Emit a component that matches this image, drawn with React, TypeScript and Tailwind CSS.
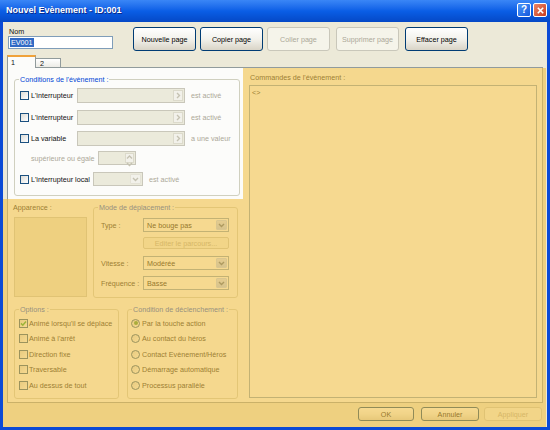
import React from 'react'

function CheckBox({ checked }: { checked?: boolean }) {
  return (
    <span className="w-[9px] h-[9px] shrink-0 border border-[#1c5180] bg-gradient-to-br from-[#dcdcd7] to-white flex items-center justify-center">
      {checked && (
        <svg viewBox="0 0 7 7" className="w-[7px] h-[7px]">
          <path d="M1 3.4 L2.8 5.2 L6 1.6" stroke="#21a121" strokeWidth="1.5" fill="none" />
        </svg>
      )}
    </span>
  )
}

function Radio({ checked }: { checked?: boolean }) {
  return (
    <span className="w-[9px] h-[9px] shrink-0 rounded-full border border-[#1c5180] bg-gradient-to-br from-[#dcdcd7] to-white flex items-center justify-center">
      {checked && <span className="w-[4px] h-[4px] rounded-full bg-[#3f8f2a]" />}
    </span>
  )
}

function Arrow({ color, dir = 'down' }: { color: string; dir?: 'down' | 'right' | 'up' }) {
  const d = dir === 'down' ? 'M1 2 L3.5 4.5 L6 2' : dir === 'up' ? 'M1 4.5 L3.5 2 L6 4.5' : 'M2 1 L4.5 3.5 L2 6'
  return (
    <svg viewBox="0 0 7 7" className="w-[7px] h-[7px]">
      <path d={d} stroke={color} strokeWidth="1.4" fill="none" />
    </svg>
  )
}

function Combo({ text, width, disabled }: { text?: string; width: string; disabled?: boolean }) {
  return (
    <div
      className={`${width} h-[14px] flex items-center border p-[1px] ${
        disabled ? 'border-[#c9c7ba] bg-[#ebeadb]' : 'border-[#7f9db9] bg-white'
      }`}
    >
      <span className="flex-1 pl-[2px] text-black leading-[9px]">{text}</span>
      <span
        className={`w-[11px] h-full rounded-[1px] flex items-center justify-center border ${
          disabled ? 'border-[#e4e2d6] bg-[#f2f1ea]' : 'border-[#bad0fc] bg-gradient-to-b from-[#d2defc] to-[#b2c8f6]'
        }`}
      >
        <Arrow color={disabled ? '#c5c2b2' : '#4d6185'} />
      </span>
    </div>
  )
}

function PickBox() {
  return (
    <div className="w-[108px] h-[15px] flex justify-end border border-[#c9c7ba] bg-[#ebeadb] p-[1px]">
      <span className="w-[10px] h-full border border-[#dcdacb] bg-[#f2f1ea] flex items-center justify-center">
        <Arrow color="#c5c2b2" dir="right" />
      </span>
    </div>
  )
}

function XpButton({ label, width, disabled }: { label: string; width: string; disabled?: boolean }) {
  return (
    <div
      className={`${width} flex items-center justify-center rounded-[3px] border ${
        disabled
          ? 'border-[#c9c7ba] bg-[#f5f4ea] text-[#aca899]'
          : 'border-[#003c74] bg-gradient-to-b from-white via-[#f3f2ec] to-[#d9d4c7] text-black'
      }`}
    >
      {label}
    </div>
  )
}

const options = [
  { label: "Animé lorsqu'il se déplace", checked: true },
  { label: "Animé à l'arrêt" },
  { label: 'Direction fixe' },
  { label: 'Traversable' },
  { label: 'Au dessus de tout' },
]

const triggers = [
  { label: 'Par la touche action', checked: true },
  { label: 'Au contact du héros' },
  { label: 'Contact Evènement/Héros' },
  { label: 'Démarrage automatique' },
  { label: 'Processus parallèle' },
]

export default function App() {
  return (
    <div className="relative w-[550px] h-[430px] flex flex-col bg-[#0b4ad6] font-['Liberation_Sans',Arial,sans-serif] text-[7.2px] leading-[9px] text-[#111] overflow-hidden">
      {/* title bar */}
      <div className="h-[22px] shrink-0 flex items-center pl-[6px] pr-[3px] bg-gradient-to-b from-[#3a86f6] via-[#0a5ee6] to-[#0548c6]">
        <span className="flex-1 text-white font-bold text-[9px] pb-[1px] [text-shadow:1px_1px_0_#0a2a8a]">
          Nouvel Evènement - ID:001
        </span>
        <div className="w-[14px] h-[14px] mb-[2px] rounded-[2px] border border-white bg-gradient-to-br from-[#4a95fa] to-[#1658dc] flex items-center justify-center text-white font-bold text-[10px] leading-none">
          ?
        </div>
        <div className="w-[14px] h-[14px] mb-[2px] ml-[2px] rounded-[2px] border border-white bg-gradient-to-br from-[#ec8466] to-[#c63a1c] flex items-center justify-center">
          <svg viewBox="0 0 10 10" className="w-[9px] h-[9px]">
            <path d="M2 2 L8 8 M8 2 L2 8" stroke="white" strokeWidth="1.8" />
          </svg>
        </div>
      </div>

      {/* body */}
      <div className="flex-1 mx-[3px] mb-[3px] bg-[#ece9d8] flex flex-col">
        <div className="h-[33px] shrink-0 flex items-start pl-[5px] pt-[5px]">
          <div className="w-[105px] flex flex-col">
            <span className="h-[9px] pl-[1px]">Nom</span>
            <div className="h-[13px] border border-[#7f9db9] bg-white flex items-center pl-[1px]">
              <span className="bg-[#316ac5] text-white px-[1px]">EV001</span>
            </div>
          </div>
          <div className="flex h-[24px] ml-[20px]">
            <XpButton label="Nouvelle page" width="w-[63px]" />
            <div className="ml-[4px] flex">
              <XpButton label="Copier page" width="w-[63px]" />
            </div>
            <div className="ml-[4px] flex">
              <XpButton label="Coller page" width="w-[63px]" disabled />
            </div>
            <div className="ml-[6px] flex">
              <XpButton label="Supprimer page" width="w-[63px]" disabled />
            </div>
            <div className="ml-[6px] flex">
              <XpButton label="Effacer page" width="w-[63px]" />
            </div>
          </div>
        </div>

        {/* tabs */}
        <div className="h-[12px] shrink-0 flex items-end pl-[4px]">
          <div className="relative z-10 -mb-[1px] w-[29px] h-[13px] border border-b-0 border-[#919b9c] border-t-[2px] border-t-[#f0a23a] bg-[#fcfcfa] pl-[3px] pt-[1px]">
            1
          </div>
          <div className="w-[25px] h-[9px] border border-l-0 border-b-0 border-[#919b9c] bg-gradient-to-b from-white to-[#ecebe6] pl-[4px]">
            2
          </div>
        </div>

        {/* tab page */}
        <div className="ml-[4px] w-[536px] h-[336px] shrink-0 border border-[#919b9c] bg-[#fcfcfa] flex">
          <div className="w-[236px] pl-[6px] flex flex-col">
            <fieldset className="mt-[6.5px] w-[226px] h-[121px] border border-[#d0d0bf] rounded-[3px]">
              <legend className="ml-[4px] px-[1px] text-[#0046d5]">Conditions de l'évènement :</legend>
              <div className="pl-[5px] pt-[4.5px] flex flex-col">
                <div className="h-[15px] flex items-center">
                  <CheckBox />
                  <span className="ml-[2px] w-[46px]">L'interrupteur</span>
                  <PickBox />
                  <span className="ml-[6px] text-[#aca899]">est activé</span>
                </div>
                <div className="mt-[7px] h-[15px] flex items-center">
                  <CheckBox />
                  <span className="ml-[2px] w-[46px]">L'interrupteur</span>
                  <PickBox />
                  <span className="ml-[6px] text-[#aca899]">est activé</span>
                </div>
                <div className="mt-[6px] h-[15px] flex items-center">
                  <CheckBox />
                  <span className="ml-[2px] w-[46px]">La variable</span>
                  <PickBox />
                  <span className="ml-[6px] text-[#aca899]">a une valeur</span>
                </div>
                <div className="mt-[5px] h-[14px] flex items-center">
                  <span className="ml-[11px] w-[67px] text-[#aca899]">supérieure ou égale</span>
                  <div className="w-[38px] h-full flex justify-end border border-[#c9c7ba] bg-[#ebeadb] p-[1px]">
                    <span className="w-[9px] h-full flex flex-col border border-[#dcdacb] bg-[#f2f1ea]">
                      <span className="flex-1 flex items-center justify-center">
                        <Arrow color="#c5c2b2" dir="up" />
                      </span>
                      <span className="flex-1 flex items-center justify-center">
                        <Arrow color="#c5c2b2" />
                      </span>
                    </span>
                  </div>
                </div>
                <div className="mt-[7px] h-[14px] flex items-center">
                  <CheckBox />
                  <span className="ml-[2px] w-[62px]">L'interrupteur local</span>
                  <Combo width="w-[50px]" disabled />
                  <span className="ml-[6px] text-[#aca899]">est activé</span>
                </div>
              </div>
            </fieldset>

            <div className="mt-[7px] flex">
              <div className="w-[73px] flex flex-col">
                <span className="h-[9px] -ml-[1px]">Apparence :</span>
                <div className="mt-[5.5px] h-[80px] border border-[#c9c7ba] bg-[#ece9d8]" />
              </div>
              <fieldset className="ml-[6px] w-[145px] h-[95px] border border-[#d0d0bf] rounded-[3px]">
                <legend className="ml-[4px] px-[1px] text-[#0046d5]">Mode de déplacement :</legend>
                <div className="pl-[7px] pt-[6.5px] flex flex-col">
                  <div className="h-[14px] flex items-center">
                    <span className="w-[42px]">Type :</span>
                    <Combo text="Ne bouge pas" width="w-[86px]" />
                  </div>
                  <div className="mt-[5px] h-[12px] flex">
                    <span className="w-[42px]" />
                    <div className="w-[86px] flex items-center justify-center rounded-[2px] border border-[#c9c7ba] bg-[#f5f4ea] text-[#aca899]">
                      Editer le parcours...
                    </div>
                  </div>
                  <div className="mt-[7px] h-[14px] flex items-center">
                    <span className="w-[42px]">Vitesse :</span>
                    <Combo text="Modérée" width="w-[86px]" />
                  </div>
                  <div className="mt-[6px] h-[14px] flex items-center">
                    <span className="w-[42px]">Fréquence :</span>
                    <Combo text="Basse" width="w-[86px]" />
                  </div>
                </div>
              </fieldset>
            </div>

            <div className="mt-[7px] flex">
              <fieldset className="w-[105px] h-[94px] border border-[#d0d0bf] rounded-[3px]">
                <legend className="ml-[4px] px-[1px] text-[#0046d5]">Options :</legend>
                <div className="pl-[4px] pt-[2px] flex flex-col">
                  {options.map((o) => (
                    <div key={o.label} className="h-[15.5px] flex items-center">
                      <CheckBox checked={o.checked} />
                      <span className="ml-[1px]">{o.label}</span>
                    </div>
                  ))}
                </div>
              </fieldset>
              <fieldset className="ml-[8px] w-[111px] h-[94px] border border-[#d0d0bf] rounded-[3px]">
                <legend className="ml-[4px] px-[1px] text-[#0046d5]">Condition de déclenchement :</legend>
                <div className="pl-[3px] pt-[2px] flex flex-col">
                  {triggers.map((t) => (
                    <div key={t.label} className="h-[15.5px] flex items-center">
                      <Radio checked={t.checked} />
                      <span className="ml-[2px]">{t.label}</span>
                    </div>
                  ))}
                </div>
              </fieldset>
            </div>
          </div>

          <div className="flex-1 pl-[5px] flex flex-col">
            <span className="mt-[5px] h-[9px] ml-[1px]">Commandes de l'évènement :</span>
            <div className="mt-[3px] w-[288px] h-[313px] border border-[#7f9db9] bg-white pl-[2px] pt-[2px]">
              &lt;&gt;
            </div>
          </div>
        </div>

        {/* bottom buttons */}
        <div className="flex justify-end pr-[5px] mt-[4px]">
          <div className="h-[14px] flex">
            <XpButton label="OK" width="w-[56px]" />
            <div className="ml-[7px] flex">
              <XpButton label="Annuler" width="w-[58px]" />
            </div>
            <div className="ml-[5px] flex">
              <XpButton label="Appliquer" width="w-[58px]" disabled />
            </div>
          </div>
        </div>
      </div>

      {/* highlight overlay */}
      <div className="absolute left-[243px] top-[68px] w-[303px] h-[359px] bg-[#f0c046]/60 pointer-events-none" />
      <div className="absolute left-[3px] top-[199px] w-[240px] h-[228px] bg-[#f0c046]/60 pointer-events-none" />
    </div>
  )
}
